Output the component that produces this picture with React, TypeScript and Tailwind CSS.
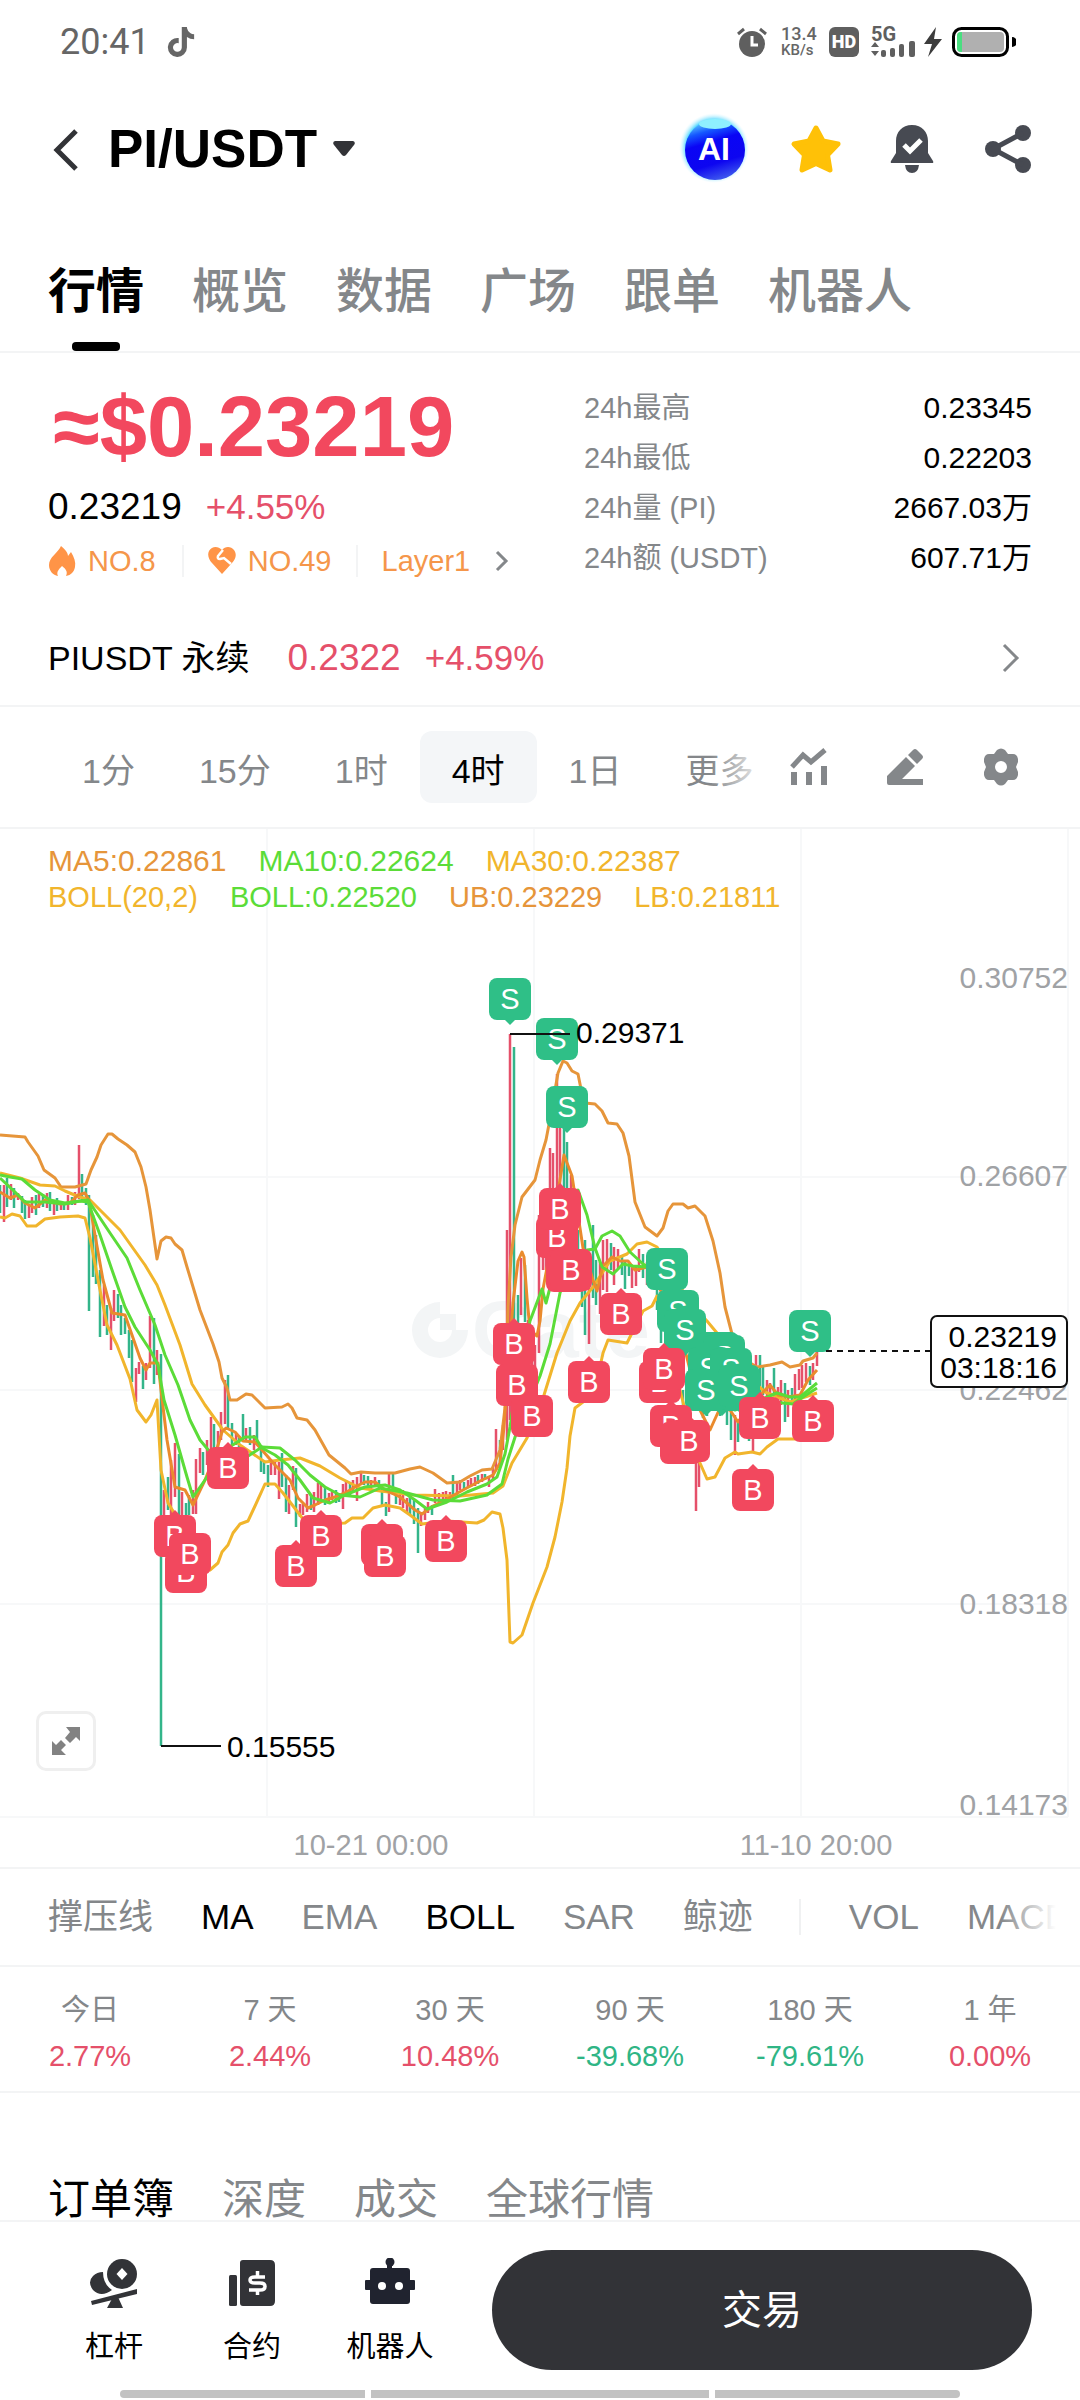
// App.tsx: PI/USDT の相場画面。上からヘッダー、価格、チャート、指標、下部バー。
import { Fragment } from "react";
import { FaTiktok } from "react-icons/fa6";

type Side = "B" | "S";
type Point = [number, number];

const RED = "#f2485e";
const GREEN = "#2fbf87";
const ORANGE = "#e6953a";
const YELLOW = "#f1b52c";
const LIME = "#5bdc38";

const mainTabs = ["行情", "概览", "数据", "广场", "跟单", "机器人"];
const bookTabs = ["订单簿", "深度", "成交", "全球行情"];
const intervals = ["1分", "15分", "1时", "4时", "1日", "更多"];

const dayStats = [
  { label: "24h最高", value: "0.23345" },
  { label: "24h最低", value: "0.22203" },
  { label: "24h量 (PI)", value: "2667.03万" },
  { label: "24h额 (USDT)", value: "607.71万" },
];

const overlays = [
  { label: "撑压线", active: false },
  { label: "MA", active: true },
  { label: "EMA", active: false },
  { label: "BOLL", active: true },
  { label: "SAR", active: false },
  { label: "鲸迹", active: false },
];

const returns = [
  { label: "今日", value: "2.77%" },
  { label: "7 天", value: "2.44%" },
  { label: "30 天", value: "10.48%" },
  { label: "90 天", value: "-39.68%" },
  { label: "180 天", value: "-79.61%" },
  { label: "1 年", value: "0.00%" },
];

// x top bottom color
const candleData = `
0 1185 1213 G,4 1185 1222 R,7 1178 1207 G,11 1184 1200 R,14 1188 1208 G,18 1193 1200 R,22 1196 1213 G,25 1200 1219 G,
29 1205 1218 R,32 1197 1213 R,36 1195 1215 G,39 1194 1208 R,43 1194 1207 G,47 1193 1208 R,50 1192 1211 G,54 1200 1215 R,
57 1198 1211 G,61 1201 1210 R,64 1202 1210 G,68 1195 1210 R,72 1197 1205 G,75 1192 1205 R,79 1145 1199 R,82 1174 1200 G,
86 1188 1205 G,89 1195 1311 G,93 1215 1277 G,96 1235 1284 G,100 1270 1337 G,104 1285 1326 R,107 1305 1335 G,111 1308 1350 R,
114 1290 1321 R,118 1294 1318 G,121 1305 1335 G,125 1318 1334 G,129 1330 1358 G,132 1340 1382 G,136 1368 1402 R,139 1362 1374 R,
143 1366 1389 G,146 1363 1380 R,150 1316 1368 R,154 1318 1384 G,157 1350 1375 R,161 1354 1746 G,164 1490 1515 R,168 1477 1510 G,
171 1460 1515 R,175 1443 1497 R,179 1454 1515 G,182 1492 1515 R,186 1503 1515 G,189 1495 1515 G,193 1490 1514 R,196 1459 1514 R,
200 1448 1473 R,203 1452 1475 G,207 1440 1465 R,211 1417 1450 R,214 1424 1450 G,218 1431 1450 R,221 1412 1440 R,225 1380 1424 R,
228 1375 1430 G,232 1423 1445 G,236 1434 1445 R,239 1436 1450 G,243 1414 1442 G,246 1428 1440 R,250 1427 1445 G,254 1435 1450 R,
257 1420 1445 G,261 1445 1472 G,264 1460 1474 G,268 1465 1487 G,271 1460 1475 R,275 1460 1475 R,279 1462 1499 R,282 1453 1487 G,
286 1475 1512 G,289 1485 1514 R,293 1466 1490 R,296 1468 1527 G,300 1504 1517 R,303 1504 1515 R,307 1494 1512 R,311 1495 1510 G,
314 1492 1512 R,318 1483 1505 R,321 1485 1500 R,325 1488 1505 G,329 1493 1502 R,332 1492 1500 R,336 1490 1503 G,339 1493 1502 G,
343 1484 1509 R,346 1480 1495 R,350 1482 1495 G,353 1480 1492 R,357 1477 1501 R,361 1472 1484 R,364 1475 1485 G,368 1476 1488 G,
371 1480 1490 R,375 1477 1485 R,379 1480 1492 G,382 1485 1505 G,386 1502 1516 G,389 1472 1512 R,393 1474 1495 G,396 1488 1504 G,
400 1494 1505 R,403 1490 1508 R,407 1498 1512 R,410 1495 1515 G,414 1500 1524 G,418 1508 1553 G,421 1512 1526 R,425 1508 1520 R,
428 1502 1513 R,432 1505 1515 G,435 1489 1503 R,439 1493 1502 R,443 1492 1500 R,446 1491 1500 R,450 1492 1499 R,453 1475 1502 G,
457 1482 1496 R,460 1480 1490 R,464 1482 1490 G,468 1480 1488 R,471 1478 1487 R,475 1477 1486 R,478 1475 1484 G,482 1474 1482 R,
485 1474 1480 G,489 1476 1487 R,493 1468 1480 R,496 1429 1470 R,500 1440 1465 G,503 1425 1450 R,507 1230 1440 R,510 1034 1420 R,
514 1047 1350 G,518 1295 1390 G,521 1258 1315 R,525 1265 1322 G,528 1320 1380 R,532 1330 1370 R,535 1345 1368 R,539 1215 1353 R,
543 1250 1270 R,546 1240 1270 R,550 1148 1260 R,553 1153 1250 R,557 1074 1240 R,560 1110 1200 R,564 1128 1230 G,567 1142 1250 G,
571 1175 1260 R,575 1220 1270 G,578 1230 1280 G,582 1270 1307 G,585 1240 1335 G,589 1255 1344 R,593 1225 1298 G,596 1260 1305 G,
600 1262 1314 R,603 1240 1290 R,607 1239 1292 R,611 1243 1270 G,614 1247 1285 R,618 1249 1268 R,622 1255 1275 G,625 1262 1289 G,
629 1265 1276 G,632 1265 1288 R,636 1265 1286 R,639 1249 1272 R,643 1254 1278 G,647 1262 1285 R,657 1280 1310 G,661 1290 1343 G,
665 1300 1330 G,683 1390 1405 G,696 1450 1511 R,699 1450 1487 R,703 1400 1418 G,707 1405 1416 G,720 1405 1416 G,727 1400 1425 G,
731 1410 1440 G,735 1415 1455 R,738 1420 1442 G,749 1430 1441 G,753 1430 1452 R,756 1355 1400 R,760 1355 1395 G,763 1367 1395 G,
767 1380 1398 R,770 1383 1397 R,774 1368 1395 G,778 1387 1400 R,781 1380 1405 R,785 1383 1422 G,788 1390 1417 R,792 1388 1402 G,
795 1374 1400 R,799 1369 1390 R,802 1365 1388 R,806 1363 1382 R,810 1366 1385 G,813 1363 1380 R,817 1352 1366 R`;

const candles = candleData
  .trim()
  .split(",")
  .map((row) => {
    const [x, top, bottom, color] = row.trim().split(" ");
    return { x: Number(x), top: Number(top), bottom: Number(bottom), up: color === "R" };
  });

const upperBand =
  "0,1135 25,1137 28,1142 38,1156 44,1170 55,1178 61,1187 75,1187 86,1184 91,1170 97,1157 101,1145 108,1134 112,1134 118,1139 127,1145 135,1152 141,1167 146,1187 150,1210 157,1259 161,1241 166,1237 171,1238 175,1244 182,1250 187,1267 200,1310 213,1344 219,1362 222,1378 227,1388 230,1400 237,1400 246,1394 252,1395 265,1408 282,1407 288,1404 292,1408 297,1418 307,1420 315,1430 329,1455 345,1468 351,1474 361,1472 375,1473 395,1473 410,1469 420,1467 433,1473 447,1483 460,1482 470,1476 482,1470 492,1469 500,1450 505,1408 508,1307 511,1257 515,1225 522,1197 535,1180 540,1160 546,1140 550,1119 554,1096 558,1073 563,1061 567,1063 572,1071 578,1074 581,1089 585,1103 595,1104 602,1111 608,1123 617,1124 623,1133 629,1156 635,1202 645,1227 657,1236 663,1228 668,1211 673,1204 683,1204 688,1208 695,1206 705,1216 713,1241 720,1273 725,1307 732,1334 745,1360 757,1367 770,1365 782,1362 790,1367 800,1365 803,1361 813,1358 817,1353";
const lowerBand =
  "0,1217 5,1218 12,1214 20,1216 27,1226 36,1226 45,1219 60,1217 78,1216 85,1218 90,1238 100,1290 107,1325 117,1345 130,1379 137,1410 146,1422 151,1415 157,1400 161,1470 168,1503 173,1511 180,1540 195,1572 210,1570 218,1563 222,1552 228,1545 233,1533 240,1524 248,1521 255,1506 265,1484 275,1484 283,1493 290,1502 303,1519 320,1524 345,1523 352,1518 363,1518 373,1508 385,1505 400,1508 410,1515 422,1524 447,1521 477,1523 484,1520 492,1512 500,1514 503,1528 507,1560 509,1615 510,1642 513,1643 522,1635 533,1603 547,1567 555,1537 562,1502 567,1468 570,1436 575,1408 587,1399 598,1376 603,1353 608,1340 627,1343 632,1333 643,1311 652,1306 657,1296 668,1340 680,1390 690,1430 700,1463 707,1479 715,1477 725,1458 735,1452 738,1454 752,1452 760,1454 767,1447 778,1439 800,1439 817,1436";
const ma30 =
  "0,1173 20,1178 40,1185 55,1186 65,1191 77,1196 90,1200 100,1210 120,1230 145,1265 157,1285 165,1305 180,1345 192,1384 205,1405 223,1430 240,1445 265,1462 280,1460 300,1458 320,1466 340,1478 360,1488 380,1491 413,1495 460,1496 493,1493 503,1486 512,1463 527,1438 540,1408 557,1353 570,1321 580,1303 593,1287 610,1261 627,1254 637,1244 647,1242 657,1247 690,1303 707,1321 717,1333 740,1370 765,1392 790,1402 817,1393";
const ma5 =
  "0,1192 10,1198 18,1195 25,1203 35,1208 45,1200 60,1204 70,1203 78,1195 85,1193 89,1200 95,1235 103,1280 112,1313 125,1315 132,1335 140,1358 146,1370 150,1363 158,1363 161,1390 167,1440 175,1487 185,1490 193,1505 205,1480 215,1455 222,1432 226,1428 235,1432 243,1441 255,1442 262,1450 275,1465 290,1480 298,1498 308,1508 315,1505 325,1500 335,1497 345,1493 355,1487 365,1482 375,1482 385,1490 400,1497 415,1510 422,1514 433,1506 447,1499 463,1490 480,1481 493,1475 500,1463 504,1427 508,1367 513,1303 518,1261 522,1252 524,1257 527,1298 530,1330 537,1336 540,1321 543,1289 550,1252 558,1192 564,1155 572,1176 578,1215 583,1248 593,1280 597,1291 603,1266 612,1257 620,1261 628,1261 635,1270 647,1267 660,1289 680,1330 700,1410 710,1430 720,1408 730,1410 738,1422 750,1406 760,1395 770,1385 778,1395 788,1397 800,1395 808,1380 817,1370";
const ma10 =
  "0,1178 15,1192 25,1202 45,1202 65,1204 80,1201 88,1202 100,1235 112,1270 125,1307 135,1327 150,1350 158,1365 164,1400 175,1435 187,1477 193,1497 205,1480 225,1450 245,1437 255,1437 262,1448 275,1455 288,1465 300,1480 313,1498 330,1503 345,1495 365,1487 385,1485 400,1490 415,1500 427,1509 447,1502 467,1492 487,1484 497,1477 505,1454 510,1427 517,1381 530,1321 542,1289 546,1303 552,1280 562,1238 570,1197 578,1190 587,1215 595,1248 602,1267 613,1274 623,1264 633,1266 647,1267 665,1290 690,1340 705,1390 720,1405 735,1410 760,1400 777,1393 790,1397 800,1397 817,1383";
const middleBand =
  "0,1175 10,1177 22,1179 35,1190 50,1200 65,1203 88,1200 110,1233 127,1258 140,1290 155,1325 165,1355 178,1385 190,1420 200,1440 210,1452 225,1463 245,1458 262,1447 280,1448 295,1460 310,1475 325,1487 340,1495 360,1497 380,1488 407,1493 433,1500 460,1501 487,1495 502,1484 508,1459 517,1431 527,1408 540,1376 550,1344 560,1293 573,1257 587,1250 595,1249 602,1236 612,1231 620,1236 630,1252 643,1264 655,1270 675,1300 700,1360 730,1390 760,1400 783,1403 793,1404 803,1397 817,1388";

const curves = [
  { points: upperBand, color: ORANGE },
  { points: lowerBand, color: YELLOW },
  { points: ma30, color: YELLOW },
  { points: ma5, color: "#ea8b2d" },
  { points: ma10, color: LIME },
  { points: middleBand, color: LIME },
];

const sells: Point[] = [
  [510, 999], [557, 1039], [567, 1107], [667, 1269], [678, 1311], [685, 1330],
  [718, 1353], [724, 1356], [709, 1368], [731, 1369], [722, 1390], [706, 1390], [739, 1386], [810, 1331],
];
const buys: Point[] = [
  [175, 1536], [186, 1572], [190, 1554], [228, 1468], [296, 1566], [321, 1536], [382, 1545], [385, 1556],
  [446, 1541], [514, 1344], [517, 1385], [532, 1416], [557, 1237], [560, 1209], [567, 1271], [571, 1270],
  [621, 1314], [589, 1382], [660, 1382], [664, 1369], [671, 1426], [681, 1443], [689, 1441],
  [760, 1418], [753, 1490], [813, 1421],
];

const priceTicks = [
  { y: 977, label: "0.30752" },
  { y: 1175, label: "0.26607" },
  { y: 1389, label: "0.22462" },
  { y: 1603, label: "0.18318" },
  { y: 1804, label: "0.14173" },
];

function Marker({ at: [x, y], side }: { at: Point; side: Side }) {
  const tip =
    side === "B"
      ? `M${x - 6} ${y - 20}L${x} ${y - 26}L${x + 6} ${y - 20}Z`
      : `M${x - 6} ${y + 20}L${x} ${y + 26}L${x + 6} ${y + 20}Z`;
  return (
    <g fill={side === "B" ? RED : GREEN}>
      <rect x={x - 21} y={y - 21} width="42" height="42" rx="8" />
      <path d={tip} />
      <text x={x} y={y + 10} textAnchor="middle" fontSize="29" fill="#fff">
        {side}
      </text>
    </g>
  );
}

function PriceChart() {
  return (
    <svg viewBox="0 829 1080 1038" className="block h-auto w-full" role="img" aria-label="PI/USDT K线">
      <g stroke="#f7f8f9" strokeWidth="2">
        {[1177, 1390, 1604, 1817].map((y) => (
          <path key={y} d={`M0 ${y}H1068`} />
        ))}
        {[267, 534, 801, 1068].map((x) => (
          <path key={x} d={`M${x} 829V1817`} />
        ))}
      </g>
      <g fill="#f3f5f6">
        <path d="M440 1302A28 28 0 1 0 468 1330H452A12 12 0 1 1 440 1318Z" />
        <path d="M440 1314H456V1330H440Z" />
        <text x="472" y="1357" fontSize="80" fontWeight="700">
          Gate
        </text>
      </g>
      <g fontSize="30" fill="#a0a2a5" textAnchor="end">
        {priceTicks.map((tick) => (
          <text key={tick.label} x="1068" y={tick.y + 11}>
            {tick.label}
          </text>
        ))}
      </g>
      <g strokeWidth="2.5">
        {candles.map((c) => (
          <path key={c.x} d={`M${c.x} ${c.top}V${c.bottom}`} stroke={c.up ? "#e5506a" : "#33b58a"} />
        ))}
      </g>
      {curves.map((c) => (
        <polyline
          key={c.points}
          points={c.points}
          fill="none"
          stroke={c.color}
          strokeWidth="3"
          strokeLinejoin="round"
        />
      ))}
      {sells.map((p) => (
        <Marker key={p.join()} at={p} side="S" />
      ))}
      {buys.map((p) => (
        <Marker key={p.join()} at={p} side="B" />
      ))}
      <g stroke="#111" strokeWidth="2">
        <path d="M510 1034H570" />
        <path d="M161 1746H221" />
        <path d="M826 1351H930" strokeDasharray="6 5" />
        <rect x="931" y="1316" width="136" height="71" rx="6" fill="#fff" />
      </g>
      <g fontSize="30" fill="#000">
        <text x="576" y="1043">0.29371</text>
        <text x="227" y="1757">0.15555</text>
        <text x="1057" y="1347" textAnchor="end">0.23219</text>
        <text x="1057" y="1378" textAnchor="end">03:18:16</text>
      </g>
      <g fontSize="29" fill="#a0a2a5" textAnchor="middle">
        <text x="371" y="1855">10-21 00:00</text>
        <text x="816" y="1855">11-10 20:00</text>
      </g>
    </svg>
  );
}

function StatusBar() {
  return (
    <div className="flex h-[84px] items-center justify-between pl-[60px] pr-16 font-['Roboto',sans-serif] text-[#666]">
      <div className="flex items-center gap-4">
        <span className="text-[36px] leading-10">20:41</span>
        <FaTiktok className="size-[30px]" />
      </div>
      <div className="flex items-center">
        <svg viewBox="0 0 30 30" className="size-[30px]">
          <circle cx="15" cy="17" r="13" fill="#5f5f5f" />
          <path d="M1 7L7 2M29 7L23 2" stroke="#5f5f5f" strokeWidth="3" />
          <path d="M15 9V18H21" fill="none" stroke="#fff" strokeWidth="3" />
        </svg>
        <div className="ml-[14px] w-9 font-medium">
          <p className="text-[18px] leading-4">13.4</p>
          <p className="text-[15px] leading-4">KB/s</p>
        </div>
        <span className="ml-3 flex size-[30px] items-center justify-center rounded-md bg-[#5f5f5f] text-[18px] font-black leading-none text-white">
          HD
        </span>
        <svg viewBox="0 0 46 32" className="ml-3 h-8 w-[46px]" fill="#5f5f5f">
          <text x="0" y="15" fontSize="20" fontWeight="700">5G</text>
          <path d="M0 21L4 16L8 21ZM0 25H8L4 30Z" />
          <rect x="10" y="24" width="5" height="7" rx="2" />
          <rect x="19" y="22" width="5" height="9" rx="2" />
          <rect x="28" y="18" width="5" height="13" rx="2" />
          <rect x="38" y="15" width="6" height="16" rx="2" />
        </svg>
        <svg viewBox="0 0 18 30" className="ml-[7px] h-[30px] w-[18px]" fill="#3c3c3c">
          <path d="M12 0L0 17H8L4 30L18 12H10Z" />
        </svg>
        <svg viewBox="0 0 64 30" className="ml-[10px] h-[30px] w-16">
          <rect x="1.5" y="1.5" width="54" height="27" rx="8" fill="#fff" stroke="#000" strokeWidth="3" />
          <rect x="5" y="5" width="47" height="20" rx="4" fill="#b0b0b0" />
          <path d="M9 5H10V25H9A4 4 0 0 1 5 21V9A4 4 0 0 1 9 5Z" fill="#4ade80" />
          <path d="M60 10A5 5 0 0 1 60 20Z" fill="#000" />
        </svg>
      </div>
    </div>
  );
}

function Header() {
  return (
    <header className="flex h-[130px] items-center justify-between px-12">
      <div className="flex items-center">
        <button aria-label="返回">
          <svg viewBox="0 0 36 48" className="h-12 w-9" fill="none" stroke="#323337" strokeWidth="5">
            <path d="M28 6L9 25L28 44" />
          </svg>
        </button>
        <h1>
          <button className="ml-6 flex items-center gap-4 text-[53px] font-bold leading-[60px] text-black">
            PI/USDT
            <svg viewBox="0 0 22 16" className="h-4 w-[22px]" fill="#323337">
              <path d="M2 0H20Q23 1 21 4L13 14Q11 16 9 14L1 4Q-1 1 2 0Z" />
            </svg>
          </button>
        </h1>
      </div>
      <div className="flex items-center gap-12">
        <button aria-label="AI">
          <svg viewBox="0 0 58 64" className="h-16 w-[58px] overflow-visible">
            <defs>
              <linearGradient id="orb" x1="0.2" y1="0" x2="0.5" y2="1">
                <stop offset="0" stopColor="#6feaff" />
                <stop offset="0.22" stopColor="#1557ff" />
                <stop offset="0.4" stopColor="#0a05f5" />
                <stop offset="0.75" stopColor="#0d06f0" />
                <stop offset="1" stopColor="#3a52ee" />
              </linearGradient>
              <radialGradient id="halo">
                <stop offset="0.8" stopColor="#52d8ff" />
                <stop offset="1" stopColor="#d8f6ff" stopOpacity="0" />
              </radialGradient>
            </defs>
            <circle cx="28" cy="31" r="35" fill="url(#halo)" />
            <circle cx="29" cy="33" r="30" fill="url(#orb)" />
            <ellipse cx="29" cy="7" rx="16" ry="5" fill="#8ff0ff" />
            <text x="28" y="43" textAnchor="middle" fontSize="32" fontWeight="700" fill="#fff">AI</text>
          </svg>
        </button>
        <button aria-label="收藏">
          <svg viewBox="0 0 48 48" className="size-12 overflow-visible">
            <path
              d="M24 3L31 16L46 19L35.500 30L38 45L24 38.500L10 45L12.500 30L2 19L17 16Z"
              fill="#ffc107"
              stroke="#ffc107"
              strokeWidth="5"
              strokeLinejoin="round"
            />
          </svg>
        </button>
        <button aria-label="提醒">
          <svg viewBox="0 0 48 48" className="size-12" fill="#474a52">
            <path d="M24 0C34 0 40 7 40 16V28L45 36Q46 38 44 38H4Q2 38 3 36L8 28V16C8 7 14 0 24 0Z" />
            <path d="M17 40H31Q30 48 24 48Q18 48 17 40Z" />
            <path d="M16 20L22 26L33 15" fill="none" stroke="#fff" strokeWidth="5" />
          </svg>
        </button>
        <button aria-label="分享">
          <svg viewBox="0 0 48 48" className="size-12" fill="#474a52">
            <circle cx="39" cy="8" r="8" />
            <circle cx="9" cy="24" r="8" />
            <circle cx="39" cy="40" r="8" />
            <path d="M39 8L9 24L39 40" fill="none" stroke="#474a52" strokeWidth="5" />
          </svg>
        </button>
      </div>
    </header>
  );
}

function Summary() {
  return (
    <section className="flex justify-between px-12 pb-7 pt-[30px]">
      <div>
        <p className="pl-[5px] text-[85px] font-bold leading-[88px] text-[#f2485e]">≈$0.23219</p>
        <p className="mt-3 flex gap-6 leading-[48px]">
          <span className="text-[37px] text-black">0.23219</span>
          <span className="text-[35px] text-[#e5506a]">+4.55%</span>
        </p>
        <div className="mt-3 flex h-9 items-center text-[29px] leading-9 text-[#f5964a]">
          <svg viewBox="0 0 28 32" className="h-8 w-7" fill="#ff9447">
            <path d="M13 1C17 4 20 8 20 11L23 7C26 12 28 17 27 22C26 27 23 30 18 31C20 27 18 24 14 21C11 24 8 27 10 31C5 30 1 26 1 20C1 12 10 8 13 1Z" />
          </svg>
          <span className="ml-3">NO.8</span>
          <span className="ml-[26px] h-8 w-[2px] bg-[#f3f4f5]" />
          <svg viewBox="0 0 28 28" className="ml-6 size-7" fill="#ff9447">
            <path d="M14 3C10 -1 4 -1 1 4C-1 8 1 13 4 16L14 27L24 16C28 12 29 7 26 3C23 -1 17 -1 14 3Z" />
            <path d="M15 3L10 9Q9 12 12 12L16 11L23 17" fill="none" stroke="#fff" strokeWidth="2.500" />
          </svg>
          <span className="ml-3">NO.49</span>
          <span className="ml-6 h-8 w-[2px] bg-[#f3f4f5]" />
          <a href="#layer1" className="ml-6 flex items-center gap-6">
            Layer1
            <svg viewBox="0 0 16 22" className="h-[22px] w-4" fill="none" stroke="#84878a" strokeWidth="3">
              <path d="M3 2L12 11L3 20" />
            </svg>
          </a>
        </div>
      </div>
      <dl className="w-[448px]">
        {dayStats.map((row) => (
          <div key={row.label} className="flex justify-between leading-[50px]">
            <dt className="text-[29px] text-[#84878a]">{row.label}</dt>
            <dd className="text-[30px] text-black">{row.value}</dd>
          </div>
        ))}
      </dl>
    </section>
  );
}

function Toolbar() {
  return (
    <div className="flex items-center border-b-2 border-[#f3f4f5] py-6 pl-[50px] pr-[60px]">
      <div className="relative flex w-[708px] overflow-hidden">
        {intervals.map((label) => (
          <button
            key={label}
            className={`h-[72px] shrink-0 rounded-xl px-8 pt-2 text-[34px] ${
              label === "4时" ? "bg-[#f4f6f8] text-black" : "text-[#84878a]"
            }`}
          >
            {label}
          </button>
        ))}
        <span className="absolute inset-y-0 right-0 w-12 bg-linear-to-r from-white/0 to-white/80" />
      </div>
      <div className="flex flex-1 items-center justify-end gap-[58px] text-[#84878a]">
        <button aria-label="指标">
          <svg viewBox="0 0 38 38" className="size-[38px]" fill="none" stroke="currentColor" strokeWidth="6">
            <path d="M2 19L13 7L21 14L35 2" strokeWidth="5" />
            <path d="M4 24V37M19 24V37M34 18V37" />
          </svg>
        </button>
        <button aria-label="画线">
          <svg viewBox="0 0 38 38" className="size-[38px]" fill="currentColor">
            <path d="M20 9L29 18L16 31H37V37H3Q1 37 1 35V28Z" />
            <path d="M22 7L27 2Q29 0 31 2L36 7Q38 9 36 11L31 16Z" />
          </svg>
        </button>
        <button aria-label="设置">
          <svg viewBox="0 0 38 38" className="size-[38px]" fill="currentColor" fillRule="evenodd">
            <path d="M15 2Q19 -1 23 2L26 6L31 6Q35 6 36 11V14L34 19L36 24V27Q35 32 31 32L26 32L23 36Q19 39 15 36L12 32L7 32Q3 32 2 27V24L4 19L2 14V11Q3 6 7 6L12 6ZM19 13A6 6 0 1 0 19 25A6 6 0 1 0 19 13Z" />
          </svg>
        </button>
      </div>
    </div>
  );
}

function FooterBar() {
  return (
    <footer className="border-t-2 border-[#f3f4f5] bg-white pt-7">
      <div className="flex gap-[33px] pl-[45px] pr-12">
        <nav className="flex text-[29px] leading-[30px] text-black">
          <a href="#margin" className="flex w-[138px] flex-col items-center justify-center gap-[22px]">
            <svg viewBox="0 0 50 52" className="h-[52px] w-[50px]" fill="#323337">
              <circle cx="33" cy="16" r="15" />
              <path d="M33 10L38.500 16L33 22L27.500 16Z" fill="#fff" />
              <path d="M14 14Q14 26 23 32Q12 40 4 32Q-2 24 4 18Q8 14 14 14Z" />
              <path d="M2 43L48 31V36L3 47Z" />
              <path d="M24 39H29L34 50H18Z" />
            </svg>
            杠杆
          </a>
          <a href="#futures" className="flex w-[138px] flex-col items-center justify-center gap-[22px]">
            <svg viewBox="0 0 46 52" className="h-[52px] w-[46px]" fill="#323337">
              <rect x="0" y="17" width="8" height="31" rx="1.500" />
              <path d="M12 2H41Q46 2 46 7V43Q46 48 41 48H14Q11 48 11 45V5Q11 2 14 2Z" />
              <path
                d="M36 19H26Q21 19 21 22T26 25H31Q36 25 36 28.500T31 32H20M28.500 13V19M28.500 32V37"
                fill="none"
                stroke="#fff"
                strokeWidth="3.500"
              />
            </svg>
            合约
          </a>
          <a href="#bots" className="flex w-[138px] flex-col items-center justify-center gap-[22px]">
            <svg viewBox="0 0 50 52" className="h-[52px] w-[50px]" fill="#20232f">
              <circle cx="25" cy="4" r="4.500" />
              <rect x="22" y="4" width="5" height="9" />
              <rect x="5" y="10" width="40" height="36" rx="3" />
              <rect x="0" y="22" width="50" height="10" rx="1" />
              <circle cx="17" cy="28" r="4" fill="#fff" />
              <circle cx="34" cy="28" r="4" fill="#fff" />
            </svg>
            机器人
          </a>
        </nav>
        <button className="h-[120px] flex-1 rounded-full bg-[#323337] text-[40px] text-white">交易</button>
      </div>
      <div className="mx-auto mb-[2px] mt-5 flex h-2 w-7/9 gap-[6px]">
        <span className="w-[245px] rounded-l-full bg-[#c2c2c2]" />
        <span className="flex-1 bg-[#c2c2c2]" />
        <span className="w-[245px] rounded-r-full bg-[#c2c2c2]" />
      </div>
    </footer>
  );
}

export default function App() {
  return (
    <div className="w-full overflow-hidden bg-white font-['Liberation_Sans','Noto_Sans_CJK_SC',sans-serif]">
      <StatusBar />
      <Header />
      <nav className="flex gap-12 border-b-2 border-[#f3f4f5] px-12 pt-12 text-[48px] font-medium leading-[60px]">
        {mainTabs.map((label, i) => (
          <button key={label} className={`flex flex-col items-center ${i === 0 ? "font-bold text-black" : "text-[#84878a]"}`}>
            {label}
            <span className={`mt-5 h-[9px] w-12 rounded-sm ${i === 0 ? "bg-black" : "bg-transparent"}`} />
          </button>
        ))}
      </nav>
      <Summary />
      <a href="#perp" className="flex h-24 items-center border-b-2 border-[#f3f4f5] pl-12 pr-[60px]">
        <span className="text-[34px] text-black">PIUSDT 永续</span>
        <span className="ml-[38px] text-[37px] text-[#e5506a]">0.2322</span>
        <span className="ml-6 text-[35px] text-[#e5506a]">+4.59%</span>
        <svg viewBox="0 0 18 30" className="ml-auto h-[30px] w-[18px]" fill="none" stroke="#84878a" strokeWidth="3">
          <path d="M2 2L15 15L2 28" />
        </svg>
      </a>
      <Toolbar />
      <section className="relative border-b-2 border-[#f3f4f5]">
        <PriceChart />
        <div className="absolute left-12 top-[13px] leading-[37px]">
          <p className="flex gap-8 text-[30px]">
            <span className="text-[#e6953a]">MA5:0.22861</span>
            <span className="text-[#5bdc38]">MA10:0.22624</span>
            <span className="text-[#f1b52c]">MA30:0.22387</span>
          </p>
          <p className="flex gap-8 text-[29px]">
            <span className="text-[#f1b52c]">BOLL(20,2)</span>
            <span className="text-[#5bdc38]">BOLL:0.22520</span>
            <span className="text-[#e6953a]">UB:0.23229</span>
            <span className="text-[#f1b52c]">LB:0.21811</span>
          </p>
        </div>
        <button
          aria-label="全屏"
          className="absolute bottom-24 left-9 flex size-[60px] items-center justify-center rounded-[10px] border-3 border-[#efefef] bg-white"
        >
          <svg viewBox="0 0 28 28" className="size-7" fill="#828282">
            <path d="M14 0H28V14L24 10L18 16L13 11L18 5Z" />
            <path d="M0 14L4 18L9 13L14 18L9 23L14 28H0Z" />
          </svg>
        </button>
      </section>
      <div className="border-b-2 border-[#f3f4f5] pl-12 pr-6">
        <div className="relative flex h-24 items-center gap-12 overflow-hidden whitespace-nowrap text-[35px] text-[#84878a]">
          {overlays.map((item) => (
            <button key={item.label} className={item.active ? "text-black" : ""}>
              {item.label}
            </button>
          ))}
          <span className="-ml-[2px] h-9 w-[2px] shrink-0 bg-[#f0f1f2]" />
          <button>VOL</button>
          <button>MACD</button>
          <span className="absolute inset-y-0 right-0 w-14 bg-linear-to-r from-white/0 to-white" />
        </div>
      </div>
      <dl className="grid grid-flow-col grid-cols-6 grid-rows-2 border-b-2 border-[#f3f4f5] pb-3 pt-5 text-center text-[29px] leading-[46px]">
        {returns.map((item) => (
          <Fragment key={item.label}>
            <dt className="text-[#84878a]">{item.label}</dt>
            <dd className={item.value.startsWith("-") ? "text-[#2fb585]" : "text-[#e5506a]"}>{item.value}</dd>
          </Fragment>
        ))}
      </dl>
      <nav className="flex h-[127px] gap-12 overflow-hidden px-12 pt-[77px] text-[42px] leading-[60px] text-[#84878a]">
        {bookTabs.map((label, i) => (
          <button key={label} className={`h-[60px] ${i === 0 ? "text-black" : ""}`}>
            {label}
          </button>
        ))}
      </nav>
      <FooterBar />
    </div>
  );
}
